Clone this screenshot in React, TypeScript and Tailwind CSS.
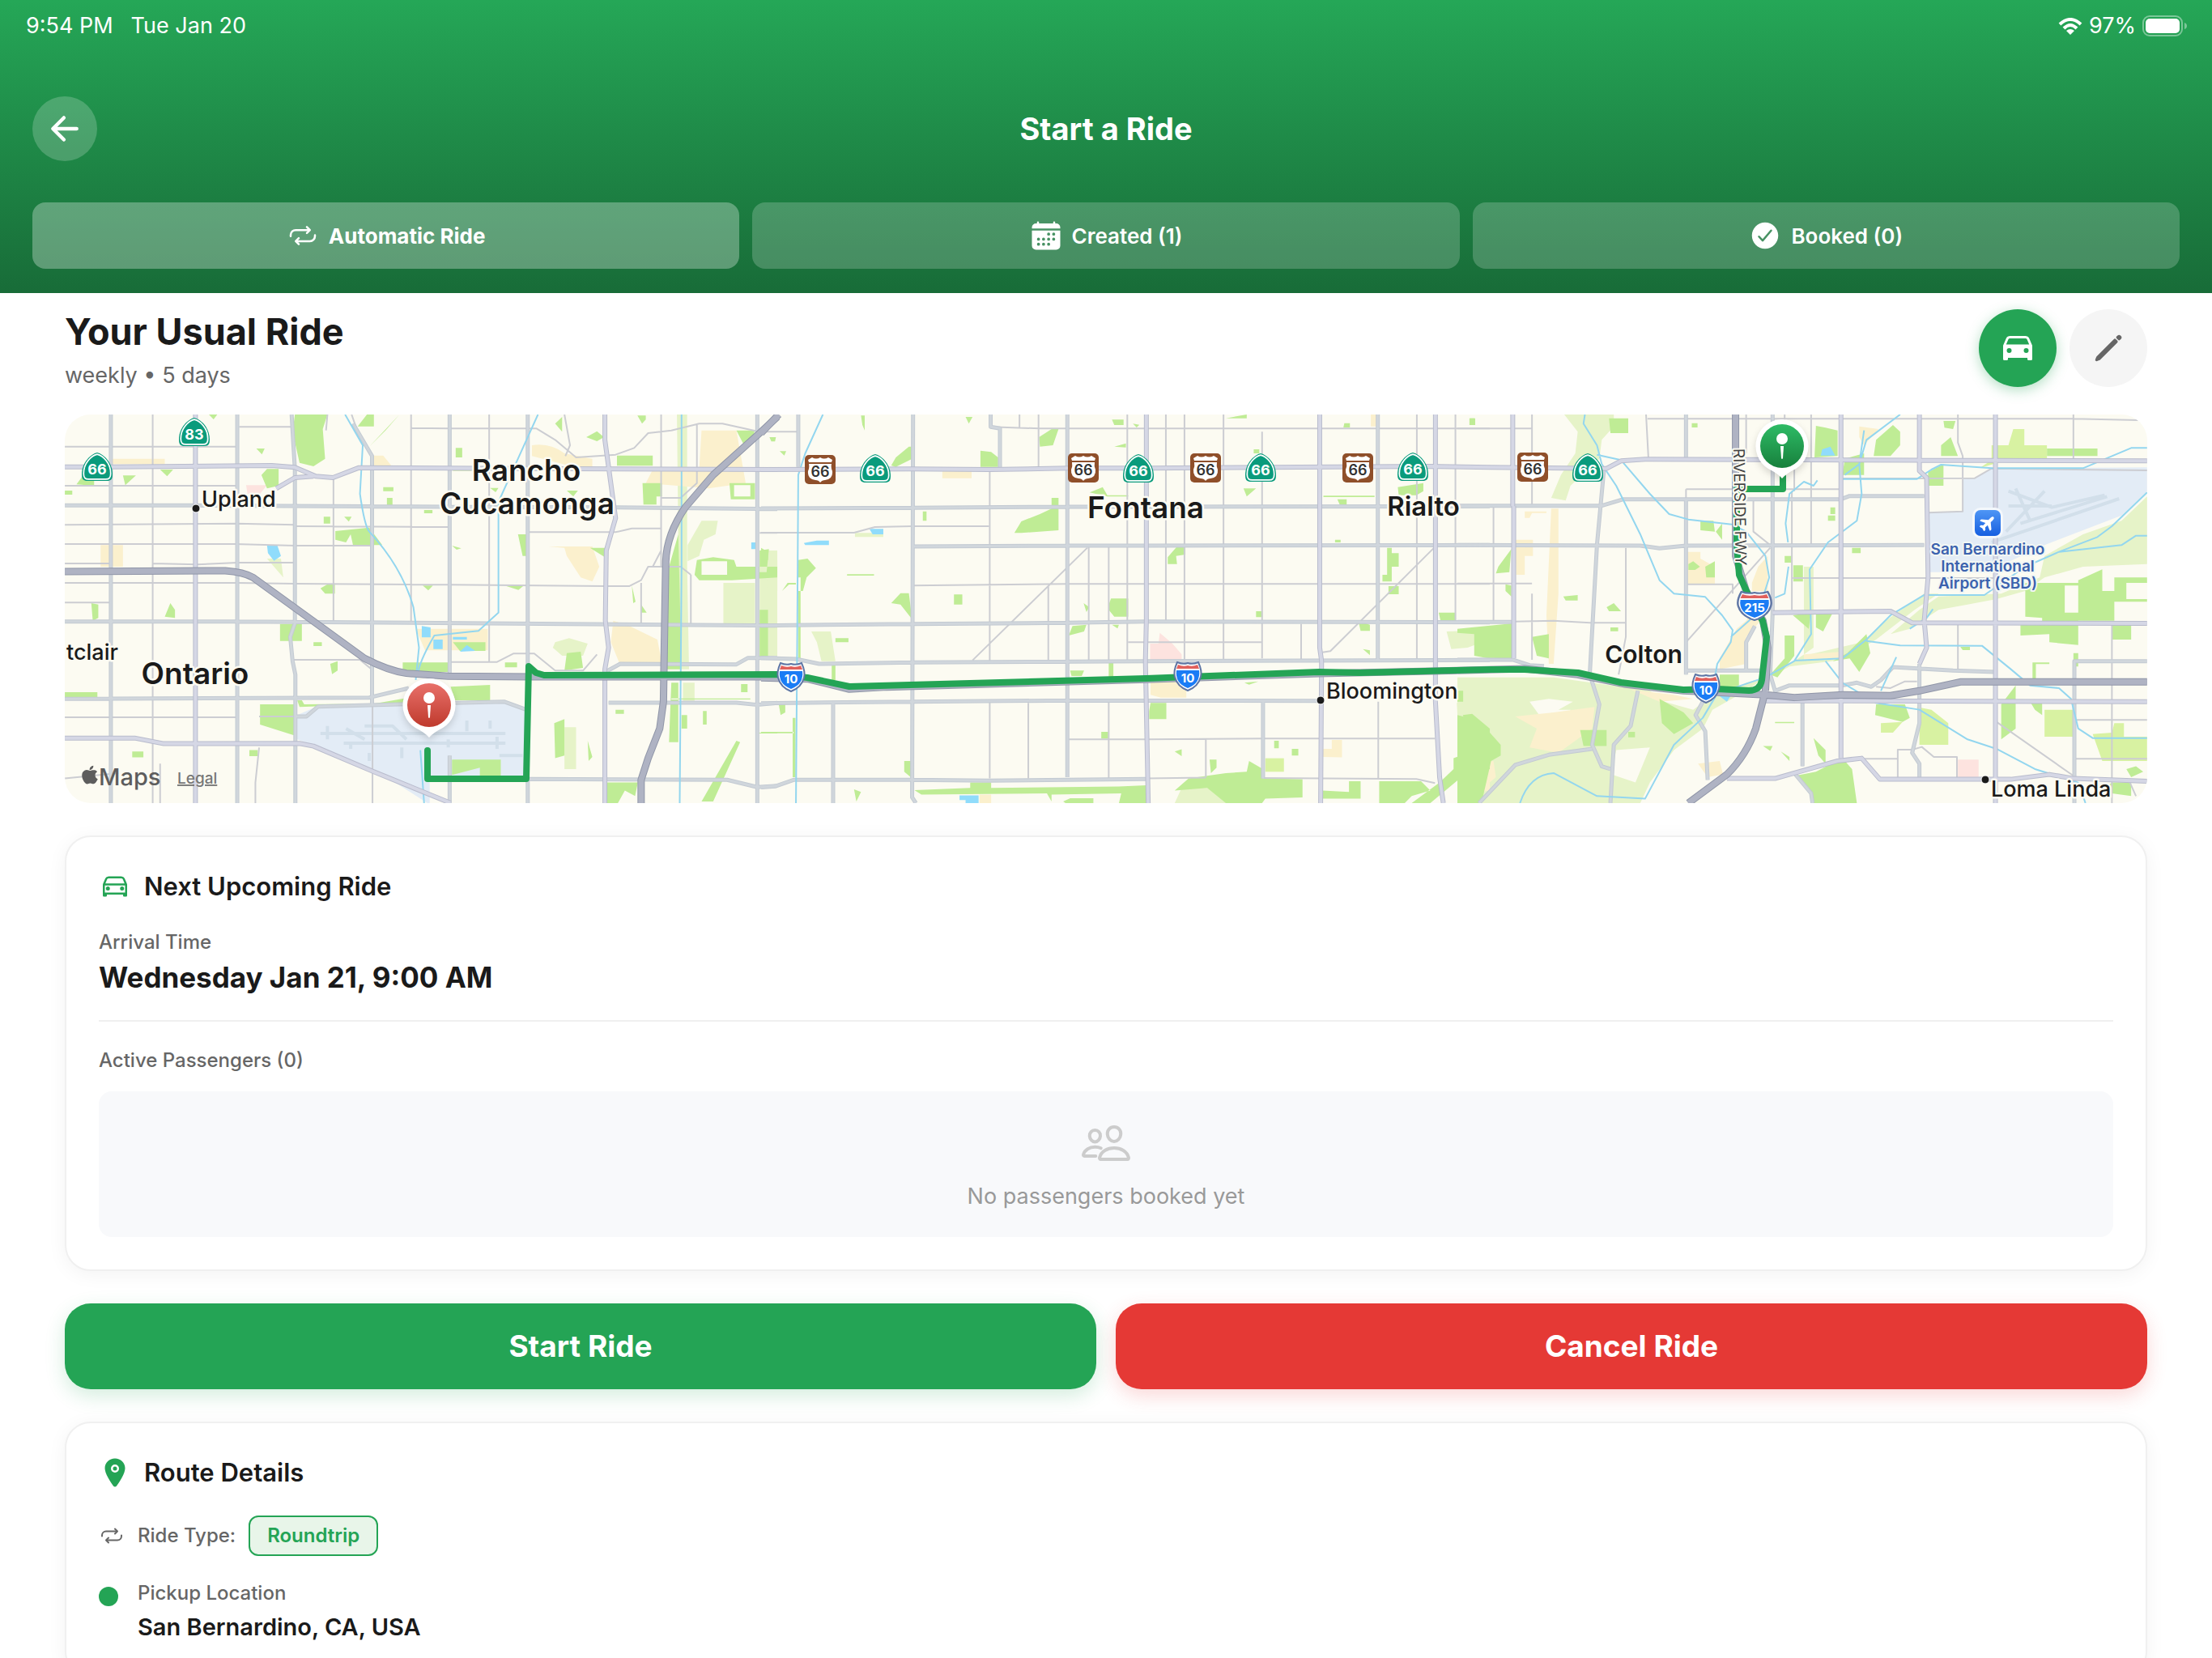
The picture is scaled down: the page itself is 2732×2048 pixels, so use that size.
import { useState } from "react";
import type { IconType } from "react-icons";
import {
  IoAirplane,
  IoArrowBack,
  IoCalendar,
  IoCar,
  IoCarOutline,
  IoCheckmarkCircle,
  IoLocation,
  IoLogoApple,
  IoPencil,
  IoPeopleOutline,
  IoRepeat,
} from "react-icons/io5";

type Tile = {
  transform: string;
  light: string;
  sand: string;
  pink: string;
  airport: string;
  park: string;
  lime: string;
  water: string;
  runway: string;
  stream: string;
  minor: string;
  major: string;
  arterial: string;
  highway: string;
};

// Map geometry, split in three tiles from west to east
const tiles: Tile[] = [
  {
    transform: "translate(60 500) scale(0.574 0.3333)",
    light:
      "M1090 880L1120 865L1160 885L1150 930H1105L1085 900Z M1352 36h22V600L1378 980h-20z M1110 1195h25V1350h-25z M1452 660H1520V810H1452Z M470 570H500L505 640Z M1375 520L1405 430H1440L1435 480L1410 500L1400 560L1375 580Z M1530 540H1568V930H1530Z M1365 1030H1390V1100H1365Z",
    sand: "M1040 150Q1080 140 1110 180L1170 200V230H1130L1040 190Z M1405 95H1480L1500 290L1420 310L1285 290L1300 240L1400 235Z M1215 800L1250 820L1310 870L1320 960L1230 965L1210 880Z M1075 525H1170L1185 600L1170 655L1145 640L1115 560L1110 530Z M697 188H720L740 230H700Z M112 520H160V600H112Z M790 830H945V910H810Z M135 200H250V220H135Z",
    pink: "M425 298H470L455 330H428Z",
    airport: "M575 1120L985 1102L1028 1135V1385H820V1476H815L700 1350L535 1240V1150Z",
    park: "M530 36H600L590 90L595 200L570 228L540 215L525 100Z M665 80L685 36H700V80Z M690 155L755 36L725 95Z M458 260L470 238H495V300L470 310Z M1157 120L1180 98L1195 120L1180 135Z M1090 70L1105 45V100Z M1223 188H1300V226H1223Z M1278 290H1320V340H1308V370H1280Z M60 295L75 260L98 270V300Z M160 262H188L165 298Z M240 240H268L255 265Z M617 468L690 455L718 520H655L650 480L640 510L617 500Z M498 812H545V875H498Z M585 680L600 665H616V700H595Z M92 735L107 740V790L95 800Z M250 785L262 735L272 760V790Z M606 960L622 950V985L610 998Z M762 955H860V990H762Z M865 1045L950 1038V1095H875Z M535 1095H545L550 1110L700 1108L775 1085L860 1050V1100L540 1120Z M455 1110H528V1225L455 1185Z M35 1065H105V1085H35Z M868 1315H973V1395H928V1345L868 1372Z M1115 920L1145 915L1150 975L1110 985Z M1088 1180L1110 1165V1300L1090 1310Z M1335 600L1355 480L1362 980H1330Z M1340 1030H1355V1250H1335Z M1395 575L1430 565L1475 575L1480 600H1568V640L1470 650H1400L1390 630ZM1405 580V630H1460V580Z M1465 290H1520V350H1468ZM1475 298V340H1510V298Z M1405 1470L1480 1245L1488 1250L1430 1470Z M1530 540L1550 535L1545 620H1530Z M1530 760H1548V940H1530Z M1200 1400H1268L1262 1450L1240 1430L1225 1476H1200Z M720 305h22v15h-22z M728 345h12v30h-12z M592 415h14v25h-14z M636 415h16l-6 18z M876 160h14v35h-14z M1010 480h18v80h-8z M1165 530H1197V565Z M1267 40h18v15l-8 15z M180 1285h24v22h-24z M432 1280h18v22h-18z M570 880h18v14h-18z M1362 1150h12v50h-12z M1160 1245l10 60-8 15z M1220 1130h18v15h-18z M1408 1135h8v50h-8z M1480 95H1520L1510 145H1495Z M447 162h18l-6 22z M805 670h22l-10 18z M868 522l20 10-10 5z M808 390h18v12h-18z M870 880H940V912H885Z M982 955h26v18h-26z M985 672h36l-10 14z M950 308h18l-6 16z M1255 670l8 60-5 5z M1275 740l12 30h-12z M1115 318h24l-10 22z M345 36h18l-8 18z M35 318h16v15h-16z M1528 1215h40v3h-40z M1340 1088h170v4h-170z M1490 1035h14v30h-14z",
    lime: "M870 235h40v10h-40z",
    water:
      "M470 520H492L500 560L485 578L472 550Z M803 820L822 825V862H803Z M828 870h20v35h-20z M885 915L900 890L918 912Z M870 860h30v10h-30z M1512 510h12v25h-12z",
    runway:
      "M585 1218H983 M635 1254H983 M600 1190V1240 M680 1190H740L770 1240 M900 1170V1210 M650 1250V1275 M965 1230V1275 M640 1200L680 1240 M860 1240V1270 M950 1170V1200 M760 1270V1310 M690 1290V1320 M970 1300H1020",
    stream:
      "M638 36L676 150L670 330Q680 450 690 470Q760 600 785 750L797 900L790 1020 M1053 36L1010 200L968 360V770L925 838L830 855Q795 960 795 1000 M800 1280L808 1476 M1362 36V600L1358 1476",
    minor:
      "M224 36V1476 M453 1270L445 1400V1476 M613 275V800 M780 36V810 M948 36V950 M1275 660V810 M1382 630V810 M697 1110V1476 M240 1330V1476 M1318 36V600 M35 155H404 M410 82H523 M780 86L863 88H1050L1090 130L1135 195L1220 185L1260 160L1290 105L1340 95L1400 70H1450L1525 98 M35 300H404 M35 445L406 440L530 445 M530 450L863 453 M1031 472H1220L1255 458H1318 M35 516H400L530 522H696 M35 588H134 M224 588L320 592L406 585H530 M35 660H406L530 663L863 667L1197 672H1250L1275 650L1290 600H1360L1382 630 M35 733H134 M527 945H670L695 980 M863 953H965L1000 922H1045L1090 985H1150L1180 925 M35 1158H404 M453 1155H555 M1318 345H1360L1395 290V70 M1110 36L1122 150L1112 190 M600 36L597 95 M697 190L665 100L652 36 M1300 600L1318 540 M1530 475H1568 M35 1385L150 1365",
    major:
      "M134 36V1476 M406 36V1476 M523 36L530 240V810L520 860L525 950L531 1000V1476 M655 70L696 190V1110 M863 36V1000 M863 1300V1476 M1031 36V990 M1031 1390V1476 M1525 36V1476 M35 373H316L863 378L1197 380L1568 386 M35 803H406L1568 818 M35 1090L690 1085L775 1050 M531 1155H555L580 1118L980 1100L1028 1130 M1205 1104H1480L1525 1112L1568 1105 M1031 1387L1460 1390L1525 1417L1568 1412 M1198 990L1230 960L1480 962L1505 938H1568",
    arterial:
      "M316 36V1476 M1197 36V130L1220 420L1200 540L1198 800L1205 900L1197 980V1476 M35 230L135 230L480 225L530 232L575 265L612 270L668 233L1010 236L1568 240 M35 1235H185L248 1256L540 1255L570 1265L700 1360L865 1476 M490 310L530 270L570 265",
    highway:
      "M35 618L380 615Q420 620 440 640L680 940Q730 985 770 995L860 1006L1040 1008H1568 M1568 45L1530 105L1430 260L1370 380Q1330 480 1328 580L1325 880L1323 1100L1315 1200L1290 1310L1275 1390V1476",
  },
  {
    transform: "translate(940 500) scale(0.574 0.3333)",
    light:
      "M15 570L35 575V690H12Z M108 840H150L160 950H130L120 880Z M1475 840L1568 835V870L1520 900L1485 905Z M0 690H15V940H0Z M1497 1105L1568 1080V1240L1520 1200H1500Z M905 1420H1000V1476H890Z M202 475H263V490H202Z",
    sand: "M390 246H453V272H390Z M838 1020H915V1085H860L838 1075Z M1208 1305V1275H1228V1242H1250V1307Z M1312 36h12V80h-12z M1510 1380L1568 1350V1430L1530 1440Z M470 1445H495V1476H470Z",
    pink: "M837 885H855L858 845L885 885L905 925V945H837Z",
    airport: "",
    park: "M472 170L495 175L510 195V230H472Z M280 225L290 195L318 155H325V200L290 230Z M598 120L625 90H640L628 150L600 155Z M545 475L560 432L600 405L625 385V345H640V465L560 475Z M80 575L100 570L118 605L98 640L90 690H80Z M0 530L15 545V575H0Z M280 735L300 698H318L325 795L300 740Z M415 703h18v37h-18z M753 718H790V785H760L748 760V740Z M662 855L670 820L700 815L695 840Z M838 1105H872V1165H835V1135Z M875 565L895 525H913V555L893 560L895 590H875Z M1038 310H1065L1045 340Z M1347 530h10V550h15V600h-15V655h-20V630h10z M1350 672h22v30h-22z M1240 350h20v20h-15z M1210 337H1320V342H1210Z M1370 305L1425 290V320L1410 335H1372Z M1458 770H1495V800H1462Z M1285 800L1310 815V838H1290Z M1295 905L1310 910V928Z M755 55h25v20h-20z M1000 50L1045 36V50Z M440 45h15l-8 25z M760 155l25-12v15z M707 325L735 305L745 335H790V340H745Z M330 1428L450 1420V1400H495V1420L770 1415L829 1410V1476H770L775 1440L625 1445V1470L615 1440L345 1445Z M890 1430L920 1385L1000 1365L1045 1360L1050 1320L1080 1350V1385L1165 1388V1455L1085 1460L1078 1476H1000L960 1420Z M1208 1430L1265 1435V1395H1290V1460H1208Z M1330 1395H1420L1440 1430L1400 1450L1385 1476H1330Z M1490 1310L1530 1285L1568 1310V1350L1500 1390L1440 1476H1400L1460 1400L1490 1350Z M1510 1150L1530 1145L1568 1200V1300L1545 1280L1520 1200Z M965 1315h15v30l-12 20z M732 1212h15v25h-15z M200 1425l15 10-10 35z M308 1320h14v60l-14-20z M160 865h28v15h-28z M38 1110H52V1140L42 1150Z M1540 860L1568 840V940L1540 920Z M185 628h58v5h-58z M152 960h8v60h-8z M80 640h5V940h-5z M890 1285l15-8v25z M1142 1275h14v25h-14z M1104 1245h10v28h-10z M1065 765h14v22h-14z M1255 68l12 0v16h-14z M1060 165h12v15h-12z M18 120h14l-2 16h-8z M40 172h14l-4 16z M348 395h8v35h-8z M215 40h8v55l-5-20z M694 735l12 15-6 18z M650 1470l15-12h50v18h-60z M45 690l12-30h18v6h-15z M755 815h15l-3 14z M1235 500h12v10h-12z M748 955h10v55h-10z M665 985h30l-5 20h-22z M1525 50h10v22h-10z M0 1212h70v5h-70z M68 1160h6v220h-6z M1040 1030l30-5-20 12z M800 70l14 4-6 10z",
    lime: "M1085 1310H1125V1360H1085Z",
    water:
      "M92 512L120 503H146V520H95Z M233 460H263V480H240Z M427 1448H468V1476H440V1465H427Z",
    runway: "",
    stream: "M133 36L95 180L80 260L78 800L75 1476",
    minor:
      "M492 245V950 M492 1100V1385 M556 36V85 M597 36V230 M788 36V950 M871 36V800 M911 36V945 M995 36V945 M1078 100V940 M1411 36V945 M1494 36V800 M575 1105V1385 M618 670V945 M705 525V945 M748 525V945 M748 1100V1385 M1162 812V945 M957 1240V1380 M1328 1100V1385 M494 82L600 88H1568 M0 100H80 M0 474H200L245 453L325 450H490 M325 670L660 664H1568 M790 880H1078 M660 1240H829L1080 1237H1450 M829 1385L957 1382 M1080 1383L1410 1387L1450 1402 M702 530L455 947 M1448 530L1225 913L1208 917",
    major:
      "M80 36V230 M327 36L325 1455L333 1476 M494 36V82L514 88V232 M659 36V1380 M155 1100V1476 M1327 36V945 M1080 1100V1385 M0 384L325 382L660 378H829L1568 376 M325 525L660 522H829L1568 520 M0 818L325 812L660 808L825 803L1568 806 M0 938L75 942L125 960L325 955L829 950L1568 946 M0 1106L325 1100L660 1096L1204 1097 M0 1418L30 1414L70 1390L325 1390L490 1393L829 1387",
    arterial:
      "M0 240L325 238L490 240L660 235L829 235L1440 228L1568 232 M829 36V800L827 950L833 1476 M1202 36V900L1206 950L1204 1476 M1451 36V1100L1460 1380L1468 1476",
    highway: "M0 105L38 36 M0 1012L100 1016L190 1054L270 1046L829 1018L1200 996L1498 985",
  },
  {
    transform: "translate(1800 500) scale(0.5944 0.3333)",
    light:
      "M222 36H325V80L300 130L295 200L265 250L235 300L225 355L195 345L215 260L245 180L250 100Z M0 1010H200L400 1060L430 1100L490 1130L520 1090L560 1070L600 1030L640 1010L600 1060L530 1130L510 1200L450 1280L400 1400L380 1476H50L0 1380ZM150 1100L190 1090L240 1100L210 1130H235L220 1200L190 1180L170 1150ZM330 1280L400 1270L370 1400L320 1370Z M1433 340L1380 430L1300 480L1220 560L1210 640L1130 700L1000 710L960 760L900 850L940 830L1000 760L1060 740L1120 720L1180 690L1220 640L1300 600L1433 590Z M720 600H740V900L700 950L650 1010L690 970L800 945L870 870L950 760L1000 700H970L890 800L840 880L720 930Z",
    sand: "M195 385H210V700L200 960H190L185 780Z M120 500H157V560H140V630H122Z M600 800L620 740L650 690L630 800L600 860V960L545 980V940L580 830Z M612 660L625 600L645 560V690H612Z M835 80L875 90L845 150L835 120Z M720 925L800 915V945H720Z M120 1155L200 1140L285 1120L280 1200L210 1290L150 1270L165 1200Z M20 1330L75 1320L80 1380L40 1440L20 1390Z M500 1330L545 1320L552 1370L520 1380Z M478 545H505V570L535 600V665H478Z M360 1055L420 1100L490 1090L450 1075Z M140 395h45v6h-30l-5 18h-10z",
    pink: "M1040 1315H1083V1380H1040Z",
    airport: "M1110 236L1433 232V320L1380 410L1220 520L1100 620H975V400L1050 395V275L1075 270Z",
    park: "M0 830L115 810V940L60 938L35 930V850L0 845Z M155 860L190 850V940L165 930Z M745 78L765 85L790 95V190L742 195Z M865 190L870 130L905 75L920 100V150L900 190Z M978 250L1010 220V300H978Z M1225 162H1280V190H1225Z M1280 190H1330V162H1280Z M1010 60H1035L1030 90L1012 85Z M1005 150L1025 120L1040 190H1005Z M315 50H355V105H318Z M805 200L845 180V260H800Z M505 430L532 430L535 470L505 465Z M537 470L550 440V500Z M85 600L112 535L108 620L80 625Z M698 595h20v60h-20z M680 855H700V930L665 1010L650 1000L680 940Z M697 780L735 770L730 830Z M745 770H780L760 840L745 825Z M850 850L858 920L835 990L815 940L780 950L810 920Z M1180 660H1290V650L1340 610V690H1365V800H1290V890L1230 880V850L1170 855V815H1215V790L1180 785ZM1262 670V770H1290V670Z M1365 640H1433V660H1390V720H1433V730H1365Z M1360 810H1400V870H1360Z M870 1110H930L940 1160L925 1175L868 1150Z M1130 1110L1160 1040V1200L1130 1240Z M1190 1100L1215 1095V1150L1200 1130Z M700 1376L745 1360L800 1310L820 1350L830 1476H740L730 1420Z M740 1235L765 1280V1330L750 1300Z M255 1205H310V1265H262Z M420 1090L470 1140L490 1180L450 1220L425 1180Z M0 1150L45 1170L90 1260V1300L70 1320L60 1400L0 1380Z M0 1380L60 1400L50 1476H0Z M545 1000H585V1050H545Z M480 590l10-10 14 20-10 12h-14z M515 600l20-20v60h-18z M220 710l30-5v20h-25z M310 750l15-15 15 30h-25z M770 410h15v20h-15z M820 530h18v20h-18z M680 560h14v25h-14z M25 50h12v25h-12z M487 68h12v16h-12z M1045 897h20v12h-15z M355 1212h14v20h-14z M660 1175h40v5h-40z M635 1265h20l-5 18z M672 1285l18 20v15z M318 825h16v14h-16z M1195 955h35v6h-28v60h-7z M1280 920h10v50h-10z M1390 1350l20-10 15 20-25 20z M1340 1430L1360 1400H1400V1450L1360 1440Z M100 665l12 5v40l-12-20z M775 380h10v25h-10z M0 1060H12V1100H0Z",
    lime: "M1085 235L1110 205V150H1145L1155 90H1178V150H1225V200H1150Z M955 1120L985 1130L1020 1180V1260H960V1180Z M880 1180L925 1175L905 1215H880Z M1220 1130H1280V1230H1220Z M1365 1180H1385V1230H1433V1320H1340L1320 1220L1360 1215Z",
    water: "M758 165L775 155L785 188H755Z M545 1080L575 1060L560 1100Z",
    runway:
      "M1110 510L1375 348 M1145 320L1235 380L1345 335 M1160 310L1190 430 M1220 320L1140 470 M1145 375H1235 M1170 440L1350 340",
    stream:
      "M265 36L262 70L290 150L300 220L330 300L380 480L420 650L450 700L515 712L550 780L572 835L568 880L540 960L535 1010 M290 185L340 205L400 330L440 405L480 425L570 443L600 470L640 560L648 640L625 770L568 860 M920 36L850 130L835 220L840 330L830 430L770 510L732 610L735 850L700 950L640 1010L540 1070L510 1160L450 1260L390 1460L290 1450L200 1365Q150 1370 130 1476 M845 95L835 220L805 260 M748 280L740 300L720 285L690 330L682 440L687 510 M688 600L680 700L660 715 M700 948L800 940L850 870L900 780L970 705H1095L1180 600L1250 545L1330 490L1360 450L1433 325 M1250 545L1380 520L1410 485H1433 M850 875L920 892L1090 893L1150 980L1190 1040L1250 1050L1275 1090L1290 1200L1320 1235H1433 M765 950L800 1030L870 1105L960 1130L1060 1240L1120 1275L1200 1350L1290 1400L1305 1476 M800 275H955L985 240L1005 222L1110 235H1300L1400 160H1433 M988 757L975 790L940 830 M912 935L880 1060",
    minor:
      "M155 36V370 M392 36L397 200 M395 52H1280L1433 58 M0 88H155 M735 36V520 M1040 36V140L1050 190V395L978 400 M1280 36V200 M75 380V800 M350 530V860L335 1000 M0 662H155 M475 313H797 M475 313V350 M615 350V470L650 520 M695 320V760 M572 700V665H478 M650 530L475 880 M697 642H1118 M118 803L200 800L275 808H350 M1040 810V985 M1360 810V1476 M1282 1168H1433 M1282 1312H1433 M1120 1175L1280 1375 M800 273L1075 272L1110 236L1433 243 M915 1385V1278H945L965 1268L990 1305H1038V1380 M840 1312H915 M1395 1390L1410 1450 M600 36V180 M680 36V60 M700 240V320 M155 945V700 M870 1045L900 1050L930 1025H955",
    major:
      "M0 374H300L345 350H797L815 338H970 M0 520L380 522L420 532L475 522L970 520 M0 805H115 M0 945H115L150 965L180 968 M475 36V195 M475 350V1000 M655 36V770L650 1000L660 1060L690 1040L800 1040L830 1030L860 1045L880 1020L905 972L1030 985L1118 990 M305 230L290 520L275 1000L295 1110L280 1260L300 1340L318 1350 M375 1060L360 1190L325 1260L318 1476 M280 1275L190 1297L120 1335L45 1476 M510 1100L495 1150L515 1210L520 1390 M618 820L600 880V980 M475 985H630 M960 960V1180L945 1290L960 1330V1388 M717 1100V1340 M1282 1476V950H1433 M700 1365L735 1440L738 1476",
    arterial:
      "M67 232L310 236L340 208L390 202L1433 208 M797 36V1310 M117 376V940 M115 36V376 M960 36V245L975 270L978 640L970 800L975 900L960 960 M1118 36V1476 M560 1385L660 1385L700 1365L790 1320L840 1310L878 1388L1150 1388L1230 1370L1280 1385L1433 1395 M640 1097L1433 1100 M655 770L900 765L945 808L1433 810",
    highway:
      "M578 36V560L600 690L635 800L645 900L640 1060 M0 985L140 978L250 1000L350 1036L470 1060L640 1075L700 1085L800 1075L900 1078L960 1060L1045 1027H1433 M640 1060L620 1200Q600 1300 560 1370L480 1476",
  },
];

const fills: { key: keyof Tile; color: string }[] = [
  { key: "light", color: "#e6f3c8" },
  { key: "sand", color: "#fbf0cd" },
  { key: "pink", color: "#fde3df" },
  { key: "airport", color: "#e3ecf6" },
  { key: "park", color: "#bfec95" },
  { key: "lime", color: "#d8f2a2" },
  { key: "water", color: "#90dcfb" },
];

const lines: { key: keyof Tile; color: string; width: number }[] = [
  { key: "runway", color: "#d2dfea", width: 4 },
  { key: "minor", color: "#cccdd2", width: 2 },
  { key: "major", color: "#c3cad2", width: 5 },
  { key: "major", color: "#d0d6dc", width: 3 },
  { key: "stream", color: "#93d6ef", width: 2 },
  { key: "arterial", color: "#b9bccd", width: 6 },
  { key: "arterial", color: "#d5d7e5", width: 4 },
  { key: "highway", color: "#9096a8", width: 9 },
  { key: "highway", color: "#afb3c3", width: 7 },
];

const ROUTE =
  "M528 927V962H650L653 823L662 831L672 834L960 833L997 837L1049 848L1416 838L1629 830L1680 831L1840 827L1883 827L1949 831L2002 843L2079 852L2121 851L2160 853Q2174 853 2176 840L2182 787L2177 767L2157 730L2148 710L2145 673V604H2202V588";

const stateShields = [
  { x: 240, y: 534, label: "83" },
  { x: 120, y: 577, label: "66" },
  { x: 1081, y: 579, label: "66" },
  { x: 1406, y: 579, label: "66" },
  { x: 1557, y: 578, label: "66" },
  { x: 1745, y: 577, label: "66" },
  { x: 1961, y: 578, label: "66" },
];

const historicShields = [
  { x: 1013, y: 580 },
  { x: 1338, y: 578 },
  { x: 1489, y: 578 },
  { x: 1677, y: 578 },
  { x: 1893, y: 577 },
];

const places = [
  { x: 650, y: 594, label: "Rancho", size: "text-[37px] font-semibold", anchor: "middle" },
  { x: 651, y: 635, label: "Cucamonga", size: "text-[37px] font-semibold", anchor: "middle" },
  { x: 241, y: 845, label: "Ontario", size: "text-[37px] font-semibold", anchor: "middle" },
  { x: 1415, y: 640, label: "Fontana", size: "text-[37px] font-semibold", anchor: "middle" },
  { x: 1758, y: 637, label: "Rialto", size: "text-[33px] font-semibold", anchor: "middle" },
  { x: 2030, y: 819, label: "Colton", size: "text-[30px] font-semibold", anchor: "middle" },
  { x: 249, y: 626, label: "Upland", size: "text-[27px] font-medium", anchor: "start" },
  { x: 82, y: 815, label: "tclair", size: "text-[27px] font-medium", anchor: "start" },
  { x: 1638, y: 863, label: "Bloomington", size: "text-[27px] font-medium", anchor: "start" },
  { x: 2459, y: 984, label: "Loma Linda", size: "text-[27px] font-medium", anchor: "start" },
] as const;

const towns = [
  { x: 242, y: 628 },
  { x: 1631, y: 865 },
  { x: 2452, y: 963 },
];

function StateShield({ x, y, label }: { x: number; y: number; label: string }) {
  const body = "M0 -18C8 -16 19 -6 19 9C19 15 17 17 12 17H-12C-17 17 -19 15 -19 9C-19 -6 -8 -16 0 -18Z";
  return (
    <g transform={`translate(${x} ${y})`}>
      <path d={body} fill="#0a9b7c" />
      <path d={body} transform="scale(0.88)" fill="#0a9b7c" stroke="#fff" strokeWidth="2" />
      <text y="9" textAnchor="middle" fill="#fff" className="text-[18px] font-bold">
        {label}
      </text>
    </g>
  );
}

function HistoricShield({ x, y }: { x: number; y: number }) {
  return (
    <g transform={`translate(${x} ${y})`}>
      <rect x="-19" y="-18" width="38" height="36" rx="5" fill="#8f4f2a" />
      <path d="M-14 -9L-15 -12L-10 -15Q-5 -12 0 -15Q5 -12 10 -15L15 -12L14 -9Z" fill="#fff" />
      <path d="M-14 -7H14Q13 -2 15 2Q16 12 6 13Q2 13 0 16Q-2 13 -6 13Q-16 12 -15 2Q-13 -2 -14 -7Z" fill="#fff" />
      <text y="9" textAnchor="middle" fill="#333" className="text-[18px] font-semibold">
        66
      </text>
    </g>
  );
}

function Interstate({ x, y, label, wide }: { x: number; y: number; label: string; wide?: boolean }) {
  return (
    <g transform={`translate(${x} ${y})`}>
      <g transform={wide ? "scale(1.25 1)" : undefined}>
        <path
          d="M-13 -17Q-6 -14 0 -16Q6 -14 13 -17Q18 -6 16 1Q13 13 0 18Q-13 13 -16 1Q-18 -6 -13 -17Z"
          fill="#fff"
          stroke="#5f76a5"
          strokeWidth="2"
        />
        <path d="M-12 -14Q-6 -11 0 -13Q6 -11 12 -14L14 -9H-14Z" fill="#e0605c" />
        <path d="M-14 -7H14Q16 9 0 15Q-16 9 -14 -7Z" fill="#1a7cf5" />
      </g>
      <text y="8" textAnchor="middle" fill="#fff" className="text-[15px] font-bold">
        {label}
      </text>
    </g>
  );
}

function Pin({ x, y, fill }: { x: number; y: number; fill: string }) {
  return (
    <g transform={`translate(${x} ${y})`} className="drop-shadow-lg">
      <path d="M0 -33A33 33 0 0 1 17 28Q5 34 0 40Q-5 34 -17 28A33 33 0 0 1 0 -33Z" fill="#fff" />
      <circle r="27" fill={fill} />
      <circle cy="-9" r="7" fill="#fff" />
      <path d="M-2 0H2L1 15Q0 17 -1 15Z" fill="#fff" />
    </g>
  );
}

function RouteMap() {
  return (
    <div className="mt-[30px] h-[480px] overflow-hidden rounded-[32px] bg-[#fcfbf2]">
      <svg viewBox="80 512 2572 480" preserveAspectRatio="xMidYMid slice" className="size-full" role="img" aria-label="Route map">
        <defs>
          <linearGradient id="pin-red" x1="0" y1="0" x2="0" y2="1">
            <stop offset="0" stopColor="#e8706a" />
            <stop offset="1" stopColor="#bf3a2d" />
          </linearGradient>
          <linearGradient id="pin-green" x1="0" y1="0" x2="0" y2="1">
            <stop offset="0" stopColor="#2ebb66" />
            <stop offset="1" stopColor="#17803c" />
          </linearGradient>
          <linearGradient id="plane" x1="0" y1="0" x2="0" y2="1">
            <stop offset="0" stopColor="#4f96f5" />
            <stop offset="1" stopColor="#165fe0" />
          </linearGradient>
        </defs>

        {fills.map((f) => (
          <g key={f.key} fill={f.color} fillRule="evenodd">
            {tiles.map((t) => (
              <path key={t.transform} d={t[f.key]} transform={t.transform} />
            ))}
          </g>
        ))}
        {lines.map((l) => (
          <g key={l.key + l.width} fill="none" stroke={l.color} strokeWidth={l.width} strokeLinejoin="round">
            {tiles.map((t) => (
              <path key={t.transform} d={t[l.key]} transform={t.transform} vectorEffect="non-scaling-stroke" />
            ))}
          </g>
        ))}

        <path d={ROUTE} fill="none" stroke="#24a455" strokeWidth="8" strokeLinecap="round" strokeLinejoin="round" />

        {stateShields.map((s) => (
          <StateShield key={s.x} {...s} />
        ))}
        {historicShields.map((s) => (
          <HistoricShield key={s.x} {...s} />
        ))}
        <Interstate x={977} y={836} label="10" />
        <Interstate x={1467} y={835} label="10" />
        <Interstate x={2107} y={850} label="10" />
        <Interstate x={2167} y={748} label="215" wide />

        {towns.map((t) => (
          <circle key={t.x} cx={t.x} cy={t.y} r="5" fill="#1a1a1a" stroke="#fff" strokeWidth="1" />
        ))}
        <g fill="#1a1a1a" stroke="#fcfbf2" strokeWidth="5" strokeLinejoin="round" paintOrder="stroke">
          {places.map((p) => (
            <text key={p.label} x={p.x} y={p.y} textAnchor={p.anchor} className={p.size}>
              {p.label}
            </text>
          ))}
          <text transform="translate(2141 554) rotate(89)" fill="#444" strokeWidth="4" className="text-[19px]">
            RIVERSIDE FWY
          </text>
        </g>

        <rect x="2436" y="627" width="38" height="38" rx="10" fill="#f4f8fc" />
        <rect x="2439" y="630" width="32" height="32" rx="7" fill="url(#plane)" />
        <IoAirplane x={2444} y={635} size={22} color="#fff" transform="rotate(-45 2455 646)" />
        <g
          fill="#3b62ae"
          stroke="#f1f6f4"
          strokeWidth="4"
          strokeLinejoin="round"
          paintOrder="stroke"
          textAnchor="middle"
          className="text-[19px] font-semibold"
        >
          <text x="2455" y="685">San Bernardino</text>
          <text x="2455" y="706">International</text>
          <text x="2455" y="727">Airport (SBD)</text>
        </g>

        <Pin x={2201} y={551} fill="url(#pin-green)" />
        <Pin x={530} y={871} fill="url(#pin-red)" />

        <IoLogoApple x={98} y={944} size={26} color="#5d5d5d" />
        <text x="122" y="970" fill="#5d5d5d" className="text-[29px] font-medium">
          Maps
        </text>
        <a href="#legal">
          <text x="219" y="968" fill="#777" className="text-[19px] font-medium underline">
            Legal
          </text>
        </a>
      </svg>
    </div>
  );
}

function StatusBar() {
  return (
    <div className="flex h-16 items-center justify-between pr-[30px] pl-8 text-[27px]">
      <div className="flex gap-[22px]">
        <span>9:54 PM</span>
        <span>Tue Jan 20</span>
      </div>
      <div className="flex items-center gap-2">
        <svg viewBox="0 0 30 21" className="h-[21px] w-[30px]" fill="none" stroke="#fff" strokeWidth="4">
          <path d="M2 8Q15 -4 28 8" />
          <path d="M7 13Q15 5 23 13" />
          <path d="M10 16Q15 12 20 16L15 21Z" fill="#fff" stroke="none" />
        </svg>
        <span>97%</span>
        <svg viewBox="0 0 56 26" className="h-[26px] w-14">
          <rect x="1" y="1" width="48" height="24" rx="8" fill="none" stroke="#fff" strokeOpacity="0.4" strokeWidth="2" />
          <rect x="4" y="4" width="42" height="18" rx="5" fill="#fff" />
          <path d="M52 9Q55 10 55 13Q55 16 52 17Z" fill="#fff" fillOpacity="0.4" />
        </svg>
      </div>
    </div>
  );
}

const tabs: { id: string; label: string; icon: IconType }[] = [
  { id: "automatic", label: "Automatic Ride", icon: IoRepeat },
  { id: "created", label: "Created (1)", icon: IoCalendar },
  { id: "booked", label: "Booked (0)", icon: IoCheckmarkCircle },
];

export default function App() {
  const [activeTab, setActiveTab] = useState("automatic");

  return (
    <div className="flex h-screen flex-col overflow-hidden bg-white font-['Inter',sans-serif] text-[#1a1a1a]">
      <header className="shrink-0 bg-linear-to-b from-[#25a757] to-[#186c38] pb-[30px] text-white">
        <StatusBar />
        <div className="mt-[55px] grid grid-cols-3 items-center px-10">
          <button
            type="button"
            aria-label="Back"
            className="flex size-20 items-center justify-center rounded-full bg-white/20"
          >
            <IoArrowBack size={48} />
          </button>
          <h1 className="text-center text-[38px] font-bold">Start a Ride</h1>
        </div>
        <nav className="mt-[51px] grid grid-cols-3 gap-4 px-10">
          {tabs.map(({ id, label, icon: Icon }) => (
            <button
              key={id}
              type="button"
              onClick={() => setActiveTab(id)}
              className={`flex h-[82px] items-center justify-center gap-3 rounded-2xl text-[26px] ${
                activeTab === id ? "bg-white/30 font-bold" : "bg-white/20 font-semibold"
              }`}
            >
              <Icon size={40} />
              {label}
            </button>
          ))}
        </nav>
      </header>

      <main className="min-h-0 flex-1 overflow-hidden px-20 pt-5">
        <div className="flex items-start justify-between">
          <div>
            <h2 className="text-[45px] leading-[56px] font-bold">Your Usual Ride</h2>
            <p className="mt-2 text-[27px] leading-9 text-[#666]">weekly • 5 days</p>
          </div>
          <div className="flex gap-4">
            <button
              type="button"
              aria-label="Ride"
              className="flex size-24 items-center justify-center rounded-full bg-[#24a455] text-white shadow-[0_4px_16px_rgba(36,164,85,0.35)]"
            >
              <IoCar size={48} />
            </button>
            <button
              type="button"
              aria-label="Edit"
              className="flex size-24 items-center justify-center rounded-full bg-[#f5f5f5] text-[#666]"
            >
              <IoPencil size={40} />
            </button>
          </div>
        </div>

        <RouteMap />

        <section className="mt-10 rounded-[32px] border-2 border-[#f0f0f0] bg-white p-10 shadow-[0_4px_24px_rgba(0,0,0,0.05)]">
          <div className="flex items-center gap-4">
            <IoCarOutline size={40} className="text-[#24a455]" />
            <h3 className="text-[31px] leading-[42px] font-semibold">Next Upcoming Ride</h3>
          </div>
          <p className="mt-8 text-[24px] leading-8 font-medium text-[#666]">Arrival Time</p>
          <p className="mt-1 text-[35px] leading-[46px] font-bold">Wednesday Jan 21, 9:00 AM</p>
          <hr className="mt-[30px] border-t-2 border-[#f0f0f0]" />
          <p className="mt-8 text-[24px] leading-8 font-medium text-[#666]">Active Passengers (0)</p>
          <div className="mt-[22px] flex flex-col items-center gap-4 rounded-2xl bg-[#f8f9fb] py-8">
            <IoPeopleOutline size={64} className="text-[#ccc]" />
            <p className="text-[27px] leading-9 text-[#999]">No passengers booked yet</p>
          </div>
        </section>

        <div className="mt-10 grid grid-cols-2 gap-6">
          <button
            type="button"
            className="h-[106px] rounded-[32px] bg-[#24a455] text-[37px] font-bold text-white shadow-[0_8px_24px_rgba(36,164,85,0.2)]"
          >
            Start Ride
          </button>
          <button
            type="button"
            className="h-[106px] rounded-[32px] bg-[#e53935] text-[37px] font-bold text-white shadow-[0_8px_24px_rgba(229,57,53,0.2)]"
          >
            Cancel Ride
          </button>
        </div>

        <section className="mt-10 rounded-[32px] border-2 border-[#f0f0f0] bg-white p-10 shadow-[0_4px_24px_rgba(0,0,0,0.05)]">
          <div className="flex items-center gap-4">
            <IoLocation size={40} className="text-[#24a455]" />
            <h3 className="text-[31px] leading-[42px] font-semibold">Route Details</h3>
          </div>
          <div className="mt-8 flex items-center gap-4 text-[24px] leading-8">
            <IoRepeat size={32} className="text-[#666]" />
            <span className="font-medium text-[#666]">Ride Type:</span>
            <span className="rounded-xl border-2 border-[#24a455] bg-[#e8f5e9] px-[21px] py-[7px] font-semibold text-[#24a455]">
              Roundtrip
            </span>
          </div>
          <div className="mt-[30px] flex gap-4">
            <div className="w-8 pt-2">
              <div className="size-6 rounded-full bg-[#24a455]" />
            </div>
            <div>
              <p className="text-[24px] leading-8 font-medium text-[#666]">Pickup Location</p>
              <p className="mt-1.5 text-[29px] leading-10 font-semibold">San Bernardino, CA, USA</p>
            </div>
          </div>
        </section>
      </main>
    </div>
  );
}
